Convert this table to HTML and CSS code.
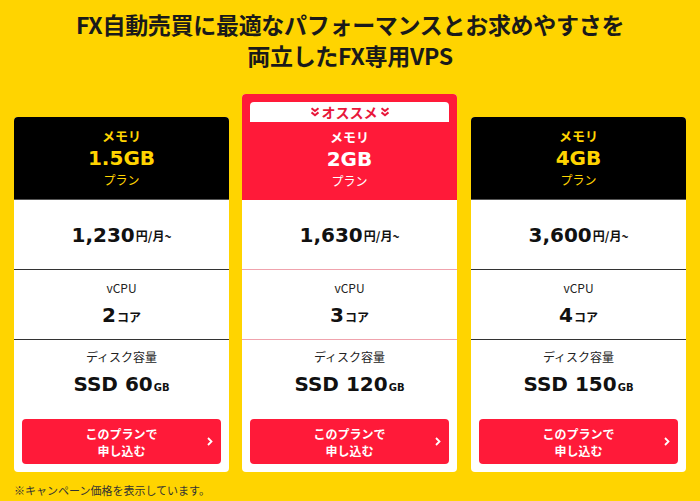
FILE: index.html
```html
<!DOCTYPE html>
<html lang="ja">
<head>
<meta charset="utf-8">
<link rel="stylesheet" href="styles.css">
</head>
<body>
<div class="page">
  <h1 class="title">FX自動売買に最適なパフォーマンスとお求めやすさを<br>両立したFX専用VPS</h1>
  <div class="plans">
    <div class="card">
      <div class="head">
        <div class="mem">メモリ</div>
        <div class="size">1.5GB</div>
        <div class="plan">プラン</div>
      </div>
      <div class="row price"><span class="num">1,230</span><span class="unit">円/月~</span></div>
      <div class="row spec"><div class="label">vCPU</div><div class="val"><span class="num">2</span><span class="unit">コア</span></div></div>
      <div class="disk spec"><div class="label">ディスク容量</div><div class="val"><span class="num">SSD 60</span><span class="unit gb">GB</span></div></div>
      <a class="btn">このプランで<br>申し込む<span class="arr"><svg width="6" height="9" viewBox="0 0 6 9"><path d="M1 1l3.5 3.5L1 8" fill="none" stroke="#fff" stroke-width="1.8"/></svg></span></a>
    </div>
    <div class="card rec">
      <div class="top">
        <div class="badge"><svg class="chev" width="10" height="10" viewBox="0 0 10 10"><path d="M1.5 1.2l3.5 2.8 3.5-2.8M1.5 5.4l3.5 2.8 3.5-2.8" fill="none" stroke="#e8173a" stroke-width="2"/></svg>オススメ<svg class="chev" width="10" height="10" viewBox="0 0 10 10"><path d="M1.5 1.2l3.5 2.8 3.5-2.8M1.5 5.4l3.5 2.8 3.5-2.8" fill="none" stroke="#e8173a" stroke-width="2"/></svg></div>
        <div class="head">
          <div class="mem">メモリ</div>
          <div class="size">2GB</div>
          <div class="plan">プラン</div>
        </div>
      </div>
      <div class="row price"><span class="num">1,630</span><span class="unit">円/月~</span></div>
      <div class="row spec"><div class="label">vCPU</div><div class="val"><span class="num">3</span><span class="unit">コア</span></div></div>
      <div class="disk spec"><div class="label">ディスク容量</div><div class="val"><span class="num">SSD 120</span><span class="unit gb">GB</span></div></div>
      <a class="btn">このプランで<br>申し込む<span class="arr"><svg width="6" height="9" viewBox="0 0 6 9"><path d="M1 1l3.5 3.5L1 8" fill="none" stroke="#fff" stroke-width="1.8"/></svg></span></a>
    </div>
    <div class="card">
      <div class="head">
        <div class="mem">メモリ</div>
        <div class="size">4GB</div>
        <div class="plan">プラン</div>
      </div>
      <div class="row price"><span class="num">3,600</span><span class="unit">円/月~</span></div>
      <div class="row spec"><div class="label">vCPU</div><div class="val"><span class="num">4</span><span class="unit">コア</span></div></div>
      <div class="disk spec"><div class="label">ディスク容量</div><div class="val"><span class="num">SSD 150</span><span class="unit gb">GB</span></div></div>
      <a class="btn">このプランで<br>申し込む<span class="arr"><svg width="6" height="9" viewBox="0 0 6 9"><path d="M1 1l3.5 3.5L1 8" fill="none" stroke="#fff" stroke-width="1.8"/></svg></span></a>
    </div>
  </div>
  <p class="note">※キャンペーン価格を表示しています。</p>
</div>
</body>
</html>
```
FILE: styles.css
```css
html, body {
  margin: 0;
  padding: 0;
  background: #ffd400;
}
body {
  width: 700px;
  height: 501px;
  overflow: hidden;
  font-family: "DejaVu Sans", "Noto Sans CJK JP", sans-serif;
  color: #111;
}
.page {
  padding: 9px 14px 0;
}
.title {
  margin: 0;
  font-family: "Noto Sans CJK JP", sans-serif;
  font-size: 23px;
  line-height: 31px;
  font-weight: 700;
  text-align: center;
  color: #1a1a1a;
  letter-spacing: -0.3px;
}
.plans {
  margin-top: 23px;
  display: flex;
  gap: 13px;
  align-items: flex-end;
}
.card {
  width: 215px;
  background: #fff;
  border-radius: 4px;
  overflow: hidden;
  display: flex;
  flex-direction: column;
  padding-bottom: 8px;
}
.card.rec { margin-right: 1px; }
.head {
  height: 83px;
  background: #000;
  color: #ffd400;
  text-align: center;
  display: flex;
  flex-direction: column;
  justify-content: center;
  border-bottom: 1px solid #555;
  box-sizing: border-box;
}
.rec .top {
  background: #ff1a39;
  padding: 8px 8px 0;
}
.rec .head {
  background: transparent;
  color: #fff;
  height: 78px;
  border-bottom: 0;
  padding-bottom: 4px;
}
.badge {
  height: 20px;
  background: #fff;
  border-radius: 4px 4px 0 0;
  display: flex;
  align-items: center;
  justify-content: center;
  gap: 2px;
  font-family: "Noto Sans CJK JP", sans-serif;
  font-size: 14px;
  font-weight: 700;
  color: #e8173a;
}
.chev { display: block; }
.mem {
  font-family: "Noto Sans CJK JP", sans-serif;
  font-size: 13px;
  font-weight: 700;
  line-height: 16px;
}
.size {
  font-size: 20px;
  font-weight: 700;
  line-height: 26px;
  margin-top: 1px;
}
.plan {
  font-family: "Noto Sans CJK JP", sans-serif;
  font-size: 12px;
  line-height: 16px;
  margin-top: 1px;
}
.row {
  height: 70px;
  border-bottom: 1px solid #333;
  box-sizing: border-box;
}
.rec .row { border-bottom-color: #f0a3ad; }
.price {
  display: flex;
  align-items: center;
  justify-content: center;
  padding-top: 1px;
}
.num {
  font-size: 20px;
  font-weight: 700;
}
.unit {
  font-family: "Noto Sans CJK JP", sans-serif;
  font-size: 12px;
  font-weight: 700;
  margin-left: 1px;
}
.spec {
  display: flex;
  flex-direction: column;
  align-items: center;
}
.row.spec { padding-top: 10px; }
.label {
  font-family: "Noto Sans CJK JP", sans-serif;
  font-size: 12px;
  line-height: 16px;
  color: #222;
}
.val {
  margin-top: 6px;
  line-height: 26px;
}
.disk {
  padding-top: 9px;
  height: 70px;
  box-sizing: border-box;
}
.gb { font-family: "DejaVu Sans", sans-serif; font-weight: 700; font-size: 10px; }
.btn {
  position: relative;
  margin: 9px 8px 0;
  height: 45px;
  background: #ff1a39;
  border-radius: 4px;
  color: #fff;
  font-family: "Noto Sans CJK JP", sans-serif;
  font-size: 12px;
  font-weight: 700;
  line-height: 17px;
  text-align: center;
  display: flex;
  align-items: center;
  justify-content: center;
  box-sizing: border-box;
  padding-top: 1px;
}
.arr {
  position: absolute;
  right: 8px;
  top: 18px;
  line-height: 0;
}
.note {
  margin: 10px 0 0;
  font-family: "Noto Sans CJK JP", sans-serif;
  font-size: 11px;
  color: #333;
}
```
